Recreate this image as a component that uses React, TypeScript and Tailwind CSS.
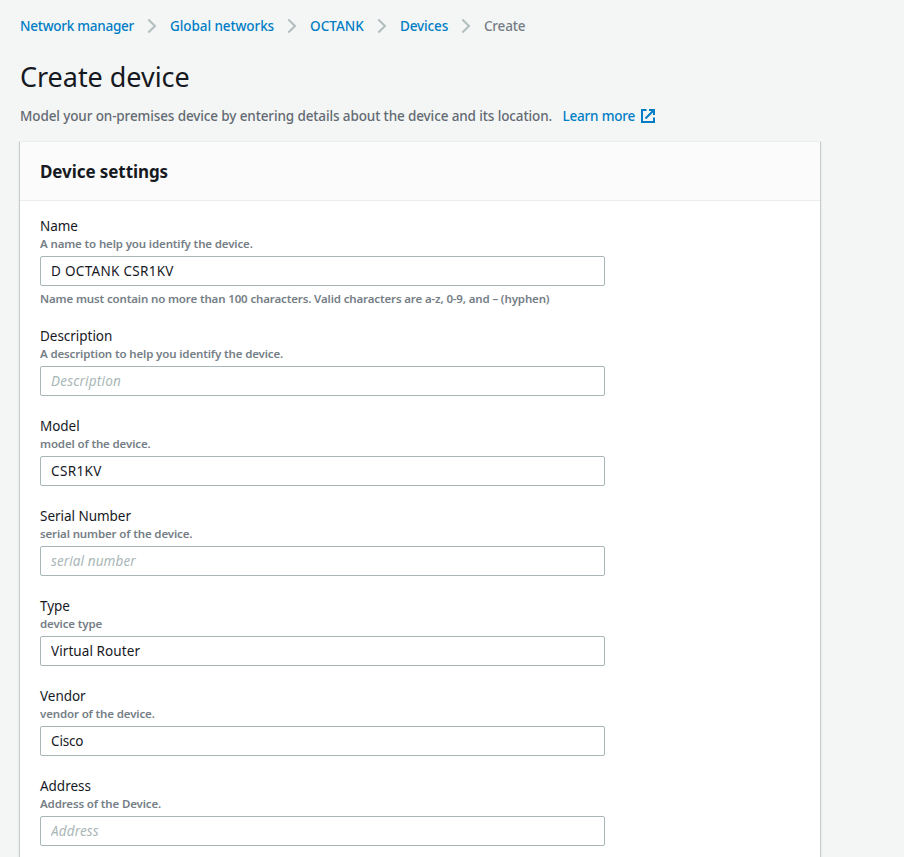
import { Fragment } from "react";

type Field = {
  label: string;
  hint: string;
  value?: string;
  placeholder?: string;
  constraint?: string;
  tracking?: string;
};

const crumbs = [
  { text: "Network manager", box: "w-[114px] tracking-[-0.25px]" },
  { text: "Global networks", box: "w-[104px] tracking-[-0.08px]" },
  { text: "OCTANK", box: "w-[54px] tracking-[0.05px]" },
  { text: "Devices", box: "w-[48px] tracking-[-0.13px]" },
];

const fields: Field[] = [
  {
    label: "Name",
    hint: "A name to help you identify the device.",
    value: "D OCTANK CSR1KV",
    constraint:
      "Name must contain no more than 100 characters. Valid characters are a-z, 0-9, and – (hyphen)",
    tracking: "tracking-[0.3px]",
  },
  {
    label: "Description",
    hint: "A description to help you identify the device.",
    placeholder: "Description",
    tracking: "tracking-[0.2px]",
  },
  { label: "Model", hint: "model of the device.", value: "CSR1KV", tracking: "tracking-[0.35px]" },
  {
    label: "Serial Number",
    hint: "serial number of the device.",
    placeholder: "serial number",
    tracking: "tracking-[0.1px]",
  },
  { label: "Type", hint: "device type", value: "Virtual Router", tracking: "tracking-[0.08px]" },
  { label: "Vendor", hint: "vendor of the device.", value: "Cisco", tracking: "tracking-[-0.15px]" },
  { label: "Address", hint: "Address of the Device.", placeholder: "Address", tracking: "tracking-[0.15px]" },
];

function Chevron() {
  return (
    <svg className="mx-[13px] h-4 w-[10px] shrink-0" viewBox="0 0 10 16" fill="none" stroke="#b1bdbe" strokeWidth="2">
      <path d="M1.3 1.5 8 8 1.3 14.5" />
    </svg>
  );
}

function ExternalIcon() {
  return (
    <svg className="ml-[5px] h-4 w-4" viewBox="0 0 16 16" fill="none" stroke="#007dc5" strokeWidth="2">
      <path d="M9 2h5v5M5.5 10.5 14 2" />
      <path d="M14 9.5V14H2V2h4.5" />
    </svg>
  );
}

function FormField({ label, hint, value, placeholder, constraint, tracking = "" }: Field) {
  return (
    <div>
      <label className="block h-5 text-[13.5px] leading-5 tracking-[-0.03px] text-[#16191f]">{label}</label>
      <p className="mb-1 h-4 text-[11.5px] leading-4 font-semibold tracking-[-0.14px] text-[#757e86]">{hint}</p>
      <input
        className={`block h-[30px] w-[565px] rounded-[2px] border border-[#aab7b8] bg-white px-[10px] text-[13.5px] text-[#16191f] placeholder:text-[#aab7b8] placeholder:italic ${tracking}`}
        defaultValue={value}
        placeholder={placeholder}
      />
      {constraint && (
        <p className="h-5 pt-[5px] text-[11.5px] leading-4 font-semibold tracking-[-0.14px] whitespace-nowrap text-[#757e86]">
          {constraint}
        </p>
      )}
    </div>
  );
}

export default function App() {
  return (
    <div className="h-[857px] overflow-hidden bg-[#f4f6f5] pl-5 font-['Noto_Sans',sans-serif]">
      <nav className="flex h-[52px] items-center text-[13.5px] whitespace-nowrap">
        {crumbs.map((c) => (
          <Fragment key={c.text}>
            <a className={`font-medium text-[#007dc5] ${c.box}`}>{c.text}</a>
            <Chevron />
          </Fragment>
        ))}
        <span className="font-medium tracking-[-0.2px] text-[#757d85]">Create</span>
      </nav>
      <h1 className="flex h-[50px] items-center text-[27px] tracking-[-0.04px] text-[#16191f]">Create device</h1>
      <div className="flex h-7 items-center text-[13.5px] whitespace-nowrap">
        <p className="w-[542.6px] font-medium tracking-[-0.12px] text-[#636a73]">
          Model your on-premises device by entering details about the device and its location.
        </p>
        <a className="flex items-center font-medium tracking-[-0.22px] text-[#007dc5]">
          Learn more
          <ExternalIcon />
        </a>
      </div>
      <section className="mt-[11px] h-[740px] w-[800px] border-t border-[#eaeded] bg-white shadow-[0_1px_1px_0_rgba(0,28,36,0.3),1px_1px_1px_0_rgba(0,28,36,0.15),-1px_1px_1px_0_rgba(0,28,36,0.15)]">
        <header className="flex h-[59px] items-center border-b border-[#eaeded] bg-[#fbfbfb] px-5 pt-[2px]">
          <h2 className="text-[17px] font-bold tracking-[-0.08px] text-[#16191f]">Device settings</h2>
        </header>
        <form className="flex flex-col gap-5 px-5 pt-[15px]">
          {fields.map((f) => (
            <FormField key={f.label} {...f} />
          ))}
        </form>
      </section>
    </div>
  );
}
